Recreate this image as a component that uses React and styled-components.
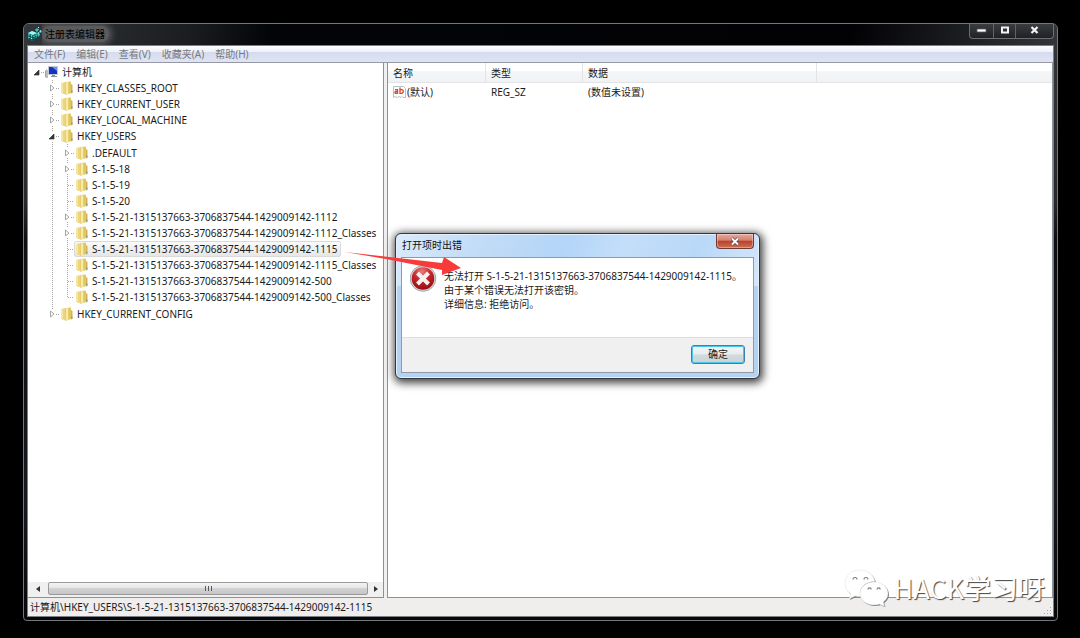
import React from "react";
import styled, { createGlobalStyle, css } from "styled-components";

const GlobalStyle = createGlobalStyle`
  * { box-sizing: border-box; }
  body {
    margin: 0;
    background: #000;
    color: #1a1a1a;
    font-family: "Noto Sans", "Noto Sans CJK SC", sans-serif;
    font-size: 10px;
    line-height: 16px;
  }
  button { font: inherit; color: inherit; padding: 0; border: 0; background: none; }
  ul { list-style: none; margin: 0; padding: 0; }
`;

const Desktop = styled.div`
  position: relative;
  display: flex;
  min-height: 100vh;
  padding: 23px 22px 17px 23px;
`;

/* ---------- main window ---------- */

const Window = styled.main`
  flex: 1;
  display: flex;
  flex-direction: column;
  min-width: 0;
  padding: 0 3px 3px;
  border: 1px solid #74777a;
  border-radius: 6px 6px 4px 4px;
  background: linear-gradient(#34363a, #26282b 30%, #0c0e11 36%, #15181c 80%, #05070a);
`;

const TitleBar = styled.header`
  display: flex;
  align-items: flex-start;
  height: 21px;
  margin: 0 -3px;
  padding-left: 4px;
  border-radius: 5px 5px 0 0;
  background: linear-gradient(100deg, #33363a, #1b1d20 16%, #030407 24%, #020205 80%, #33353a);
`;

const TitleIcon = styled.svg`
  width: 14px;
  height: 14px;
  margin-top: 3px;
`;

const Title = styled.h1`
  margin: 2px 0 0;
  padding: 0 4px 0 3px;
  font-size: 10px;
  font-weight: 400;
  line-height: 16px;
  color: #000;
  border-radius: 8px;
  background: #595b5e;
  box-shadow: 0 0 6px 3px #55575a;
  clip-path: inset(-2px -12px -3px 0);
`;

const WindowButtons = styled.div`
  display: flex;
  margin-left: auto;
  margin-right: 3px;
  border: 1px solid #6b6e72;
  border-top: 0;
  border-radius: 0 0 4px 4px;
  background: linear-gradient(#3a3c40, #1f2125);
`;

const WindowButton = styled.button`
  display: flex;
  align-items: center;
  justify-content: center;
  width: ${(p) => p.$width}px;
  height: 14px;
  padding-bottom: 2px;
  & + & { border-left: 1px solid #606367; }
`;

const Client = styled.div`
  flex: 1;
  display: flex;
  flex-direction: column;
  border: 1px solid #7b7e83;
  background: #f0eded;
`;

const MenuBar = styled.nav`
  display: flex;
  gap: 11px;
  height: 17px;
  padding-left: 6px;
  border-bottom: 1px solid #9699a3;
  background: linear-gradient(#fdfdfe, #eef1f9 35%, #d6dcee 40%, #dfe4f4);
  color: #77797f;
`;

const Panes = styled.div`
  flex: 1;
  display: flex;
  gap: 3px;
  background: #f0f0f0;
`;

const TreePane = styled.section`
  flex: 0 0 356px;
  display: flex;
  flex-direction: column;
  border: solid #8d919a;
  border-width: 0 1px 1px 0;
  background: #fff;
`;

const ListPane = styled.section`
  flex: 1;
  border: solid #8d919a;
  border-width: 0 1px 1px;
  background: #fff;
`;

/* ---------- tree ---------- */

const Tree = styled.div`
  flex: 1;
  padding: 1px 0 0 2px;
`;

const Branch = styled.ul`
  padding: ${(p) => (p.$level === 2 ? "1px 0" : "0")};
  background: repeating-linear-gradient(#a5a5a5 0 1px, transparent 1px 2px) no-repeat
    ${(p) => p.$level * 15 + 7}px 0 / 1px calc(100% - 8px);
`;

const TreeRow = styled.div`
  display: flex;
  align-items: center;
  height: 16px;
  padding-left: ${(p) => p.$level * 15}px;
`;

const Toggle = styled.button`
  display: flex;
  align-items: center;
  justify-content: center;
  width: 11px;
  height: 10px;
  padding-left: 2px;
  background: #fff;
`;

const Stub = styled.span`
  flex: none;
  width: ${(p) => (p.$long ? 6 : 3)}px;
  margin-left: ${(p) => (p.$long ? 8 : 0)}px;
  height: 1px;
  background: repeating-linear-gradient(90deg, #a5a5a5 0 1px, transparent 1px 2px);
`;

const Node = styled.span`
  display: flex;
  align-items: center;
  height: 16px;
  padding-right: 3px;
  border: 1px solid transparent;
  border-radius: 2px;
  white-space: nowrap;
  ${(p) =>
    p.$selected &&
    css`
      border-color: #dadada;
      background: linear-gradient(#fafafa, #e6e6e6);
    `}
`;

const NodeIcon = styled.svg`
  flex: none;
  width: 14px;
  height: 14px;
  margin-right: 3px;
`;

/* ---------- horizontal scroll bar ---------- */

const ScrollBar = styled.div`
  display: flex;
  align-items: stretch;
  height: 15px;
  padding-bottom: 2px;
  background: #f0f0f0;
`;

const ScrollArrow = styled.button`
  display: flex;
  align-items: center;
  justify-content: center;
  width: ${(p) => p.$width}px;
`;

const ScrollThumb = styled.div`
  flex: 1;
  display: flex;
  align-items: center;
  justify-content: center;
  gap: 1px;
  border: 1px solid #9a9a9a;
  border-radius: 2px;
  background: linear-gradient(#f4f4f4, #e6e6e6 45%, #d2d2d4 50%, #c6c6c9);
`;

const Grip = styled.i`
  width: 1px;
  height: 5px;
  background: #55585c;
  & + & { margin-left: 1px; }
`;

/* ---------- value list ---------- */

const ValueTable = styled.table`
  width: 100%;
  table-layout: fixed;
  border-collapse: separate;
  border-spacing: 0;
`;

const HeadCell = styled.th`
  height: 20px;
  padding: 1px 0 0 5px;
  text-align: left;
  font-weight: 400;
  border: solid #e2e4e7;
  border-width: 0 1px 1px 0;
  background: linear-gradient(#fff 40%, #f5f6f7 45%, #f1f2f4);
  &:last-child { border-right: 0; }
`;

const Cell = styled.td`
  height: 18px;
  padding: 0 0 0 5px;
`;

const ValueName = styled.span`
  display: flex;
  align-items: center;
  gap: 1px;
`;

const StatusBar = styled.footer`
  display: flex;
  justify-content: space-between;
  align-items: flex-end;
  height: 18px;
  padding: 0 1px 0 2px;
`;

const StatusText = styled.span`
  line-height: 18px;
`;

/* ---------- error dialog ---------- */

const Dialog = styled.section`
  position: absolute;
  left: 395px;
  top: 233px;
  width: 365px;
  padding: 0 5px 5px;
  border: 1px solid #33383f;
  border-radius: 6px;
  background:
    linear-gradient(115deg, #dbebfb, #c3dcf7 22%, #b3d5f8 45%, #c4defa 60%, #b9d8f8 80%, #d5e7fb) no-repeat 0 0 / 100% 52px,
    #b5d2f3;
  box-shadow: inset 0 0 0 1px #e4f0fc, 1px 2px 9px 2px rgba(0, 0, 0, 0.75);
`;

const DialogBar = styled.header`
  display: flex;
  justify-content: space-between;
  align-items: flex-start;
  height: 23px;
`;

const DialogTitle = styled.h2`
  margin: 0;
  padding-left: 1px;
  font-size: 10px;
  font-weight: 400;
  line-height: 22px;
  color: #111;
`;

const CloseButton = styled.button`
  display: flex;
  align-items: center;
  justify-content: center;
  width: 38px;
  height: 15px;
  border: 1px solid #6d3a3a;
  border-top: 0;
  border-radius: 0 0 4px 4px;
  background: linear-gradient(#e6a99f, #d5806f 45%, #bb3f29 50%, #cf6f4f);
  box-shadow: inset 0 0 0 1px rgba(255, 255, 255, 0.35);
`;

const DialogClient = styled.div`
  border: 1px solid #8d9aa9;
  background: #fff;
`;

const Message = styled.div`
  display: flex;
  gap: 7px;
  height: 79px;
  padding: 7px 0 0 8px;
`;

const MessageText = styled.p`
  margin: 4px 0 0;
  line-height: 14px;
  white-space: nowrap;
`;

const DialogFooter = styled.div`
  display: flex;
  justify-content: flex-end;
  height: 35px;
  padding: 7px 8px 0;
  border-top: 1px solid #dfdfdf;
  background: #f0f0f0;
`;

const OkButton = styled.button`
  width: 54px;
  height: 19px;
  line-height: 15px;
  border: 1px solid #3c7fb1;
  border-radius: 3px;
  background: linear-gradient(#f3f6f8, #e6ecf0 48%, #d2dade 52%, #cbd3d8);
  box-shadow: inset 0 0 0 1px #48c6ec;
`;

/* ---------- overlays ---------- */

const RedArrow = styled.svg`
  position: absolute;
  left: 344px;
  top: 250px;
  width: 120px;
  height: 28px;
  pointer-events: none;
`;

const Watermark = styled.div`
  position: absolute;
  right: 35px;
  bottom: 31px;
  display: flex;
  align-items: center;
  gap: 5px;
  font-family: "Noto Sans CJK SC", sans-serif;
  font-size: 27px;
  font-weight: 400;
  line-height: 38px;
  color: #fff;
  text-shadow: 1px 1px 1px #444;
  pointer-events: none;
`;

/* ---------- drawings ---------- */

const RegeditIcon = () => (
  <TitleIcon viewBox="0 0 14 14" aria-hidden="true">
    <path d="M0 6l4-2 5 2v5l-4 3-5-2z" fill="#1a9a98" />
    <path d="M0 6l4-2 5 2-4 2z" fill="#a6f3ef" />
    <path d="M0 8.500l5 2 4-2M0 11l5 2 4-2M2 7v6M7 7v6M5 8v6" stroke="#062b2d" strokeWidth=".7" fill="none" />
    <path d="M1 7.500v1M3.500 8.500v1M6 9v1M8 8v1M1 10v1M3.500 11v1" stroke="#9ff" strokeWidth="1" />
    <path d="M7 3l2-2 2 1.500L9 5zM11 4l2-1 1 2-2 1zM9 6l2-1 1 3-2 2z" fill="#3fc4c4" />
    <path d="M10 0l1 1M12 4h1M10 6h1" stroke="#c8ffff" />
  </TitleIcon>
);

const ComputerIcon = () => (
  <NodeIcon viewBox="0 0 14 14" aria-hidden="true">
    <path d="M0 6l2-2v9l-2-1z" fill="#9aa3a0" />
    <path d="M1 5h2v8H1z" fill="#b9c2be" />
    <path d="M3 1h10v9H3z" fill="#c4cad6" />
    <path d="M4 2h8v7H4z" fill="#1630c4" />
    <path d="M7 2h5v4z" fill="#6d8cf0" />
    <path d="M7 10h3v1h2v1H6v-1h1z" fill="#8b919b" />
  </NodeIcon>
);

const FolderIcon = () => (
  <NodeIcon viewBox="0 0 14 14" aria-hidden="true">
    <path d="M1 2l5-1v12.500L1 12z" fill="#ecd57c" />
    <path d="M1 2l2-.4V12.500L1 12z" fill="#f6e6a4" />
    <path d="M5.500 1L11 .5V12l-5.500 2z" fill="#e3c65e" />
    <path d="M6 1.200l2.200-.2v12L6 13.800z" fill="#f7eaae" />
    <path d="M11 3l1.500 1v8L11 12.500z" fill="#d6b34c" />
    <path d="M11 9.500h1.500v2H11z" fill="#7fa79b" />
  </NodeIcon>
);

const ExpandedArrow = () => (
  <svg width="7" height="7" viewBox="0 0 7 7" aria-hidden="true">
    <path d="M6 1v5H1z" fill="#3a3a3a" stroke="#222" strokeWidth=".6" />
  </svg>
);

const CollapsedArrow = () => (
  <svg width="6" height="8" viewBox="0 0 6 8" aria-hidden="true">
    <path d="M1.500 1v6L5 4z" fill="#fff" stroke="#9c9c9c" strokeWidth=".9" />
  </svg>
);

const StringIcon = () => (
  <svg width="13" height="14" viewBox="0 0 13 14" aria-hidden="true">
    <path d="M.5 1.500h10l2 2v9H10l-1-1-1 1-2-1-2 1-2-1-1.500 1z" fill="#fdfdfd" stroke="#a9b0b8" strokeWidth=".8" />
    <g fill="none" stroke="#d4482c" strokeWidth="1.300">
      <path d="M2 4.700h2.500v3.600H2.800a.9.900 0 0 1 0-1.800h1.700" />
      <path d="M7 2.500v5.800h1.500a1.800 1.800 0 0 0 0-3.600H7" />
    </g>
  </svg>
);

const ErrorIcon = () => (
  <svg width="27" height="27" viewBox="0 0 27 27" role="img" aria-label="错误">
    <defs>
      <radialGradient id="errorFill" cx=".45" cy=".2" r=".85">
        <stop offset="0" stopColor="#e88078" />
        <stop offset=".45" stopColor="#c8252a" />
        <stop offset="1" stopColor="#8e0d12" />
      </radialGradient>
    </defs>
    <circle cx="13" cy="13.500" r="12.800" fill="#d9dbdd" stroke="#8f9396" strokeWidth=".8" />
    <circle cx="13" cy="13.500" r="11.300" fill="url(#errorFill)" />
    <path d="M7.500 8l11 11M18.500 8l-11 11" stroke="#f3f3f3" strokeWidth="4" />
  </svg>
);

const ChatLogo = () => (
  <svg width="45" height="38" viewBox="0 0 45 38" aria-hidden="true">
    <g fill="#777">
      <path d="M17 2C8 2 2 8 2 15.500c0 4.500 2 8 6 10.500l-2 5 6-3c2 .6 4 .8 6 .7C15 20 22 13.500 32 13.500 30.500 6.500 24.500 2 17 2z" />
      <path d="M31 14c-8 0-14 5-14 11.500S23 37 31 37c2 0 4-.3 5.500-.9l5 2.400-1.300-4.500c3-2 4.800-5 4.800-8.500C45 19 39 14 31 14z" />
    </g>
    <g fill="#fff" stroke="#ddd" strokeWidth=".5">
      <path d="M16 1C7 1 1 7 1 14.500c0 4.500 2 8 6 10.500l-2 5 6-3c2 .6 4 .8 6 .7C14 19 21 12.500 31 12.500 29.500 5.500 23.500 1 16 1z" />
      <path d="M30 13c-8 0-14 5-14 11.500S22 36 30 36c2 0 4-.3 5.500-.9l5 2.400-1.300-4.500c3-2 4.800-5 4.800-8.500C44 18 38 13 30 13z" />
    </g>
    <g fill="none" stroke="#777" strokeWidth="1.100">
      <path d="M9 10.500a2 2 0 0 1 4 0M20 10.500a2 2 0 0 1 4 0M24 20.500a1.600 1.600 0 0 1 3.200 0M33 20.500a1.600 1.600 0 0 1 3.200 0" />
    </g>
  </svg>
);

/* ---------- data ---------- */

const menus = ["文件(F)", "编辑(E)", "查看(V)", "收藏夹(A)", "帮助(H)"];

const sid = "S-1-5-21-1315137663-3706837544-1429009142";

const registry = {
  name: "计算机",
  open: true,
  computer: true,
  children: [
    { name: "HKEY_CLASSES_ROOT", closed: true },
    { name: "HKEY_CURRENT_USER", closed: true },
    { name: "HKEY_LOCAL_MACHINE", closed: true },
    {
      name: "HKEY_USERS",
      open: true,
      children: [
        { name: ".DEFAULT", closed: true },
        { name: "S-1-5-18", closed: true },
        { name: "S-1-5-19" },
        { name: "S-1-5-20" },
        { name: `${sid}-1112`, closed: true },
        { name: `${sid}-1112_Classes`, closed: true },
        { name: `${sid}-1115`, selected: true },
        { name: `${sid}-1115_Classes` },
        { name: `${sid}-500` },
        { name: `${sid}-500_Classes` },
      ],
    },
    { name: "HKEY_CURRENT_CONFIG", closed: true },
  ],
};

function TreeNode({ node, level = 0 }) {
  const expandable = node.open || node.closed;
  return (
    <>
      <TreeRow $level={level}>
        {expandable && (
          <Toggle type="button" aria-label={node.name} aria-expanded={Boolean(node.open)}>
            {node.open ? <ExpandedArrow /> : <CollapsedArrow />}
          </Toggle>
        )}
        <Stub $long={!expandable} />
        <Node $selected={node.selected}>
          {node.computer ? <ComputerIcon /> : <FolderIcon />}
          {node.name}
        </Node>
      </TreeRow>
      {node.children && (
        <Branch $level={level + 1}>
          {node.children.map((child) => (
            <li key={child.name}>
              <TreeNode node={child} level={level + 1} />
            </li>
          ))}
        </Branch>
      )}
    </>
  );
}

export default function App() {
  return (
    <Desktop>
      <GlobalStyle />
      <Window>
        <TitleBar>
          <RegeditIcon />
          <Title>注册表编辑器</Title>
          <WindowButtons>
            <WindowButton type="button" aria-label="最小化" $width={23}>
              <svg width="11" height="6" viewBox="0 0 11 6">
                <path d="M1 2h9v3H1z" fill="#fff" stroke="#55585e" strokeWidth=".8" />
              </svg>
            </WindowButton>
            <WindowButton type="button" aria-label="最大化" $width={22}>
              <svg width="10" height="8" viewBox="0 0 10 8">
                <path d="M2 1.500h6v5H2z" fill="none" stroke="#f2f2f2" strokeWidth="2" />
              </svg>
            </WindowButton>
            <WindowButton type="button" aria-label="关闭" $width={38}>
              <svg width="9" height="8" viewBox="0 0 9 8">
                <path d="M1.500 1l6 6M7.500 1l-6 6" stroke="#f2f2f2" strokeWidth="2.200" />
              </svg>
            </WindowButton>
          </WindowButtons>
        </TitleBar>

        <Client>
          <MenuBar>
            {menus.map((name) => (
              <button type="button" key={name}>{name}</button>
            ))}
          </MenuBar>

          <Panes>
            <TreePane>
              <Tree>
                <TreeNode node={registry} />
              </Tree>
              <ScrollBar>
                <ScrollArrow type="button" aria-label="向左滚动" $width={20}>
                  <svg width="4" height="6" viewBox="0 0 4 6"><path d="M4 0v6L0 3z" fill="#333" /></svg>
                </ScrollArrow>
                <ScrollThumb><Grip /><Grip /><Grip /></ScrollThumb>
                <ScrollArrow type="button" aria-label="向右滚动" $width={15}>
                  <svg width="4" height="6" viewBox="0 0 4 6"><path d="M0 0v6l4-3z" fill="#333" /></svg>
                </ScrollArrow>
              </ScrollBar>
            </TreePane>

            <ListPane>
              <ValueTable>
                <colgroup>
                  <col width="98" />
                  <col width="97" />
                  <col width="234" />
                  <col />
                </colgroup>
                <thead>
                  <tr>
                    <HeadCell scope="col">名称</HeadCell>
                    <HeadCell scope="col">类型</HeadCell>
                    <HeadCell scope="col">数据</HeadCell>
                    <HeadCell aria-hidden="true" />
                  </tr>
                </thead>
                <tbody>
                  <tr>
                    <Cell><ValueName><StringIcon />(默认)</ValueName></Cell>
                    <Cell>REG_SZ</Cell>
                    <Cell>(数值未设置)</Cell>
                    <Cell />
                  </tr>
                </tbody>
              </ValueTable>
            </ListPane>
          </Panes>

          <StatusBar>
            <StatusText>计算机\HKEY_USERS\{sid}-1115</StatusText>
            <svg width="8" height="10" viewBox="0 0 8 10" aria-hidden="true">
              <path d="M6 1h1v1H6zM3 4h1v1H3zM6 4h1v1H6zM0 7h1v1H0zM3 7h1v1H3zM6 7h1v1H6z" fill="#aaa" />
            </svg>
          </StatusBar>
        </Client>
      </Window>

      <Dialog role="alertdialog" aria-labelledby="error-title">
        <DialogBar>
          <DialogTitle id="error-title">打开项时出错</DialogTitle>
          <CloseButton type="button" aria-label="关闭">
            <svg width="10" height="9" viewBox="0 0 10 9">
              <path d="M2 1.500l6 6M8 1.500l-6 6" stroke="#5b4a4c" strokeWidth="3.200" />
              <path d="M2 1.500l6 6M8 1.500l-6 6" stroke="#fff" strokeWidth="1.800" />
            </svg>
          </CloseButton>
        </DialogBar>
        <DialogClient>
          <Message>
            <ErrorIcon />
            <MessageText>
              无法打开 {sid}-1115。<br />
              由于某个错误无法打开该密钥。<br />
              详细信息: 拒绝访问。
            </MessageText>
          </Message>
          <DialogFooter>
            <OkButton type="button">确定</OkButton>
          </DialogFooter>
        </DialogClient>
      </Dialog>

      <RedArrow viewBox="0 0 120 28" aria-hidden="true">
        <path d="M1 2L98 13l2-6 17 11-19 7v-5L42 9z" fill="#f83a3a" />
      </RedArrow>

      <Watermark>
        <ChatLogo />
        <span>HACK学习呀</span>
      </Watermark>
    </Desktop>
  );
}
